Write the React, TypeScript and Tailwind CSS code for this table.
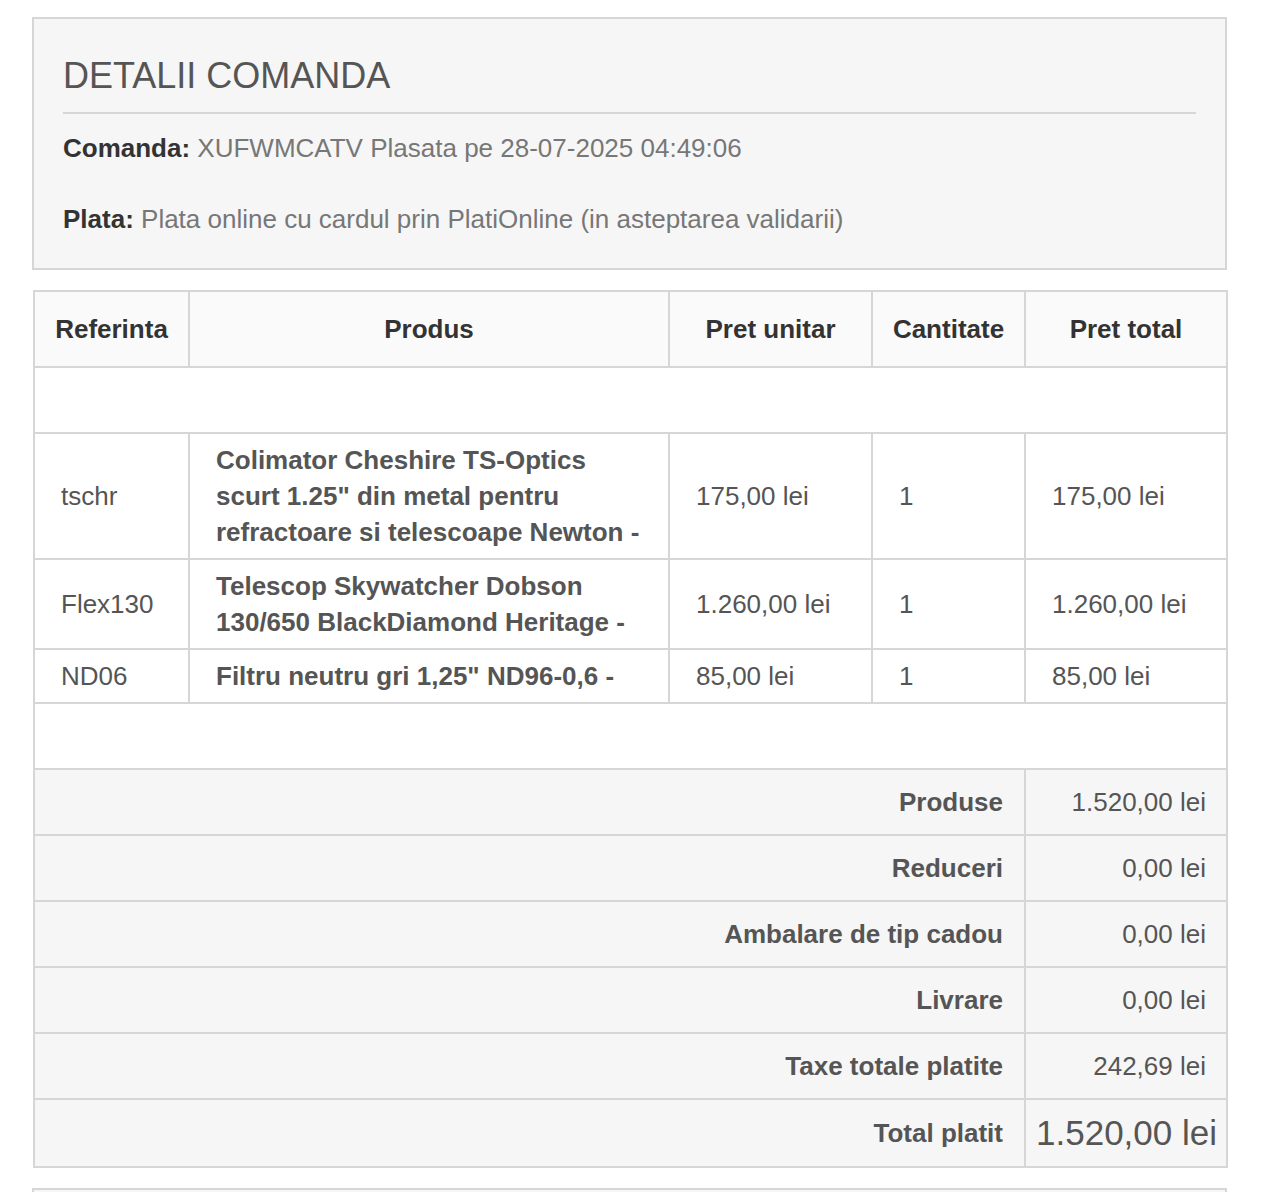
import React from 'react';

/* ─── Data ─── */
const ITEMS = [
  {
    ref: 'tschr',
    name: 'Colimator Cheshire TS-Optics scurt 1.25" din metal pentru refractoare si telescoape Newton -',
    unit: '175,00 lei',
    qty: '1',
    total: '175,00 lei',
  },
  {
    ref: 'Flex130',
    name: 'Telescop Skywatcher Dobson 130/650 BlackDiamond Heritage -',
    unit: '1.260,00 lei',
    qty: '1',
    total: '1.260,00 lei',
  },
  {
    ref: 'ND06',
    name: 'Filtru neutru gri 1,25" ND96-0,6 -',
    unit: '85,00 lei',
    qty: '1',
    total: '85,00 lei',
  },
];

const SUMMARY = [
  { label: 'Produse', value: '1.520,00 lei' },
  { label: 'Reduceri', value: '0,00 lei' },
  { label: 'Ambalare de tip cadou', value: '0,00 lei' },
  { label: 'Livrare', value: '0,00 lei' },
  { label: 'Taxe totale platite', value: '242,69 lei' },
];

const th = 'border-2 border-[#d6d6d6] py-[19px] px-[10px] text-center font-bold text-[#333]';
const td = 'border-2 border-[#d6d6d6] py-[8px] pl-[26px] pr-[26px] align-middle';

export default function App() {
  return (
    <div className="min-h-screen bg-white pt-[17px] pb-[20px] font-['Liberation_Sans',Arial,sans-serif] text-[26px] leading-[36px] text-[#555]">
      <div className="ml-[32px] w-[1195px] flex flex-col gap-[20px]">
        {/* ── Order details box ── */}
        <section className="border-2 border-[#d6d6d6] bg-[#f6f6f6] px-[29px] pt-[37px] pb-[31px]">
          <h1 className="border-b-2 border-[#d6d6d6] pb-[16px] text-[36px] leading-[40px] text-[#555]">
            DETALII COMANDA
          </h1>
          <p className="mt-[16px] text-[#777]">
            <span className="font-bold text-[#333]">Comanda:</span> XUFWMCATV Plasata pe 28-07-2025 04:49:06
          </p>
          <p className="mt-[35px] text-[#777]">
            <span className="font-bold text-[#333]">Plata:</span> Plata online cu cardul prin PlatiOnline (in asteptarea validarii)
          </p>
        </section>

        {/* ── Products table ── */}
        <table className="ml-[1px] w-[1193px] table-fixed border-collapse border-2 border-[#d6d6d6]">
          <colgroup>
            <col className="w-[155px]" />
            <col className="w-[480px]" />
            <col className="w-[203px]" />
            <col className="w-[153px]" />
            <col className="w-[202px]" />
          </colgroup>
          <thead>
            <tr className="bg-[#fafafa]">
              <th className={th}>Referinta</th>
              <th className={th}>Produs</th>
              <th className={th}>Pret unitar</th>
              <th className={th}>Cantitate</th>
              <th className={th}>Pret total</th>
            </tr>
          </thead>
          <tbody>
            <tr className="bg-white">
              <td colSpan={5} className="border-2 border-[#d6d6d6] py-[14px]">&nbsp;</td>
            </tr>
            {ITEMS.map((it) => (
              <tr key={it.ref} className="bg-white">
                <td className={td}>{it.ref}</td>
                <td className={`${td} font-bold`}>{it.name}</td>
                <td className={td}>{it.unit}</td>
                <td className={td}>{it.qty}</td>
                <td className={td}>{it.total}</td>
              </tr>
            ))}
            <tr className="bg-white">
              <td colSpan={5} className="border-2 border-[#d6d6d6] py-[14px]">&nbsp;</td>
            </tr>
            {SUMMARY.map((s) => (
              <tr key={s.label} className="bg-[#f6f6f6]">
                <td colSpan={4} className="border-2 border-[#d6d6d6] py-[14px] pr-[21px] text-right font-bold">
                  {s.label}
                </td>
                <td className="border-2 border-[#d6d6d6] py-[14px] pr-[20px] text-right">{s.value}</td>
              </tr>
            ))}
            <tr className="bg-[#f6f6f6]">
              <td colSpan={4} className="border-2 border-[#d6d6d6] py-[14px] pr-[21px] text-right font-bold">
                Total platit
              </td>
              <td className="border-2 border-[#d6d6d6] py-[14px] pr-[9px] text-right text-[35px] leading-[38px]">
                1.520,00 lei
              </td>
            </tr>
          </tbody>
        </table>

        {/* ── Next box (cut off) ── */}
        <section className="h-[60px] border-2 border-[#d6d6d6] bg-[#f6f6f6]" />
      </div>
    </div>
  );
}
